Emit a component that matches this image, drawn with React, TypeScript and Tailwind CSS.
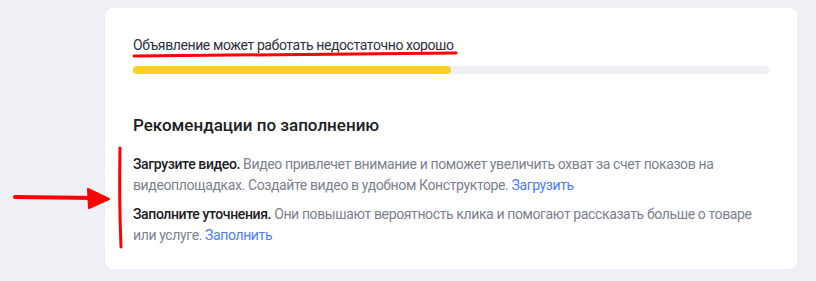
export default function App() {
  return (
    <div className="relative min-h-[281px] w-[816px] bg-[#eef0f5] pt-2 pl-[105px] font-['Roboto',sans-serif]">
      <div className="w-[692px] h-[261px] rounded-lg bg-white px-7 pt-[27px]">
        <div className="text-[14px] leading-5 tracking-[-0.4px] text-[#2e3140]">
          Объявление может работать недостаточно хорошо
        </div>
        <div className="mt-[11px] h-2 w-full rounded-full bg-[#eef0f5]">
          <div className="h-2 w-[318px] rounded-full bg-[#fdd022]" />
        </div>

        <h2 className="mt-[39px] text-[17px] leading-6 font-medium text-[#21201f]">
          Рекомендации по заполнению
        </h2>

        <div className="mt-[17px] flex flex-col gap-2 text-[14px] leading-[21px] tracking-[-0.38px] text-[#7b7f8f]">
          <p>
            <span className="font-medium text-[#21201f]">Загрузите видео.</span>{" "}
            Видео привлечет внимание и поможет увеличить охват за счет показов на
            видеоплощадках. Создайте видео в удобном Конструкторе.{" "}
            <a className="text-[#4c7dff]">Загрузить</a>
          </p>
          <p>
            <span className="font-medium text-[#21201f]">Заполните уточнения.</span>{" "}
            Они повышают вероятность клика и помогают рассказать больше о товаре
            или услуге. <a className="text-[#4c7dff]">Заполнить</a>
          </p>
        </div>
      </div>

      {/* red annotations drawn over the screenshot */}
      <svg className="absolute left-0 top-0 pointer-events-none" width="816" height="281">
        <path d="M134 56 Q 300 55 456 53" stroke="#ff0000" strokeWidth="3" fill="none" strokeLinecap="round" />
        <path d="M120 148 Q 119 200 121 247" stroke="#ff0000" strokeWidth="3" fill="none" strokeLinecap="round" />
        <path d="M15 197 L 96 198" stroke="#ff0000" strokeWidth="4" fill="none" strokeLinecap="round" />
        <path d="M88 189 L 109 199 L 89 208 Z" fill="#ff0000" stroke="#ff0000" strokeWidth="2" strokeLinejoin="round" />
      </svg>
    </div>
  );
}
